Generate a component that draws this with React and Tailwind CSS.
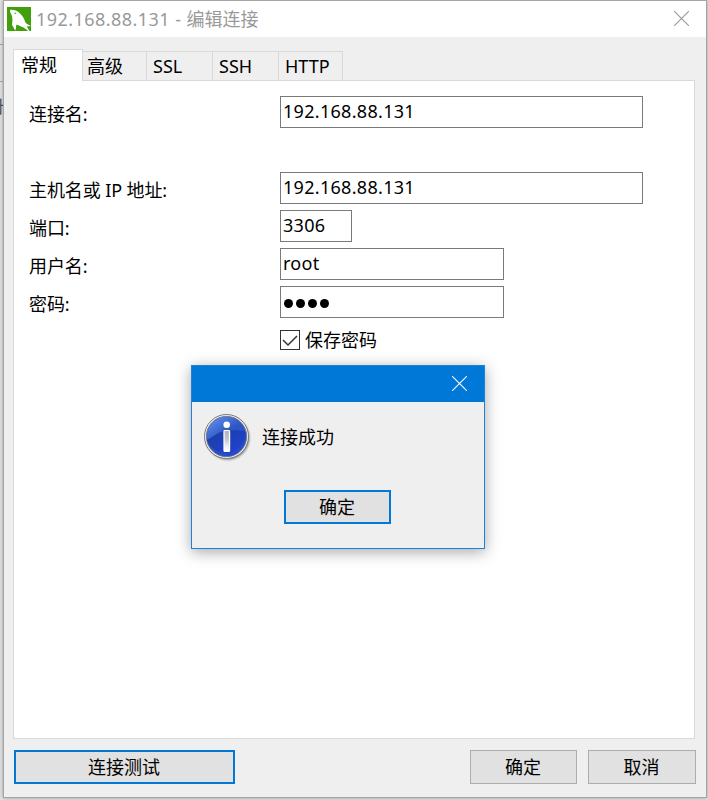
const latin = "font-['Noto_Sans','Noto_Sans_CJK_SC',sans-serif]";

function Cross({ color }) {
  return (
    <svg className="mb-px" width="15" height="15" viewBox="0 0 15 15" fill="none" stroke={color} strokeWidth="1.1">
      <path d="M0 0 15 15M15 0 0 15" />
    </svg>
  );
}

function Logo() {
  return (
    <svg width="24" height="24" viewBox="0 0 24 24">
      <rect width="24" height="24" fill="#409f0a" />
      <path
        d="M3 3C6 2.5 9.5 3.2 12 5.5C14.5 7.8 16.5 10 17.5 13C18 15 19 16.5 21 17.5L24 19L19.8 19.5L22.5 24H21C19 21.8 17 20.5 14 19.4C12 18.8 10.5 17.5 9.3 17.8C9 20 9.2 22 8.2 23.5C7 22 6.8 20 5.3 18.5C4.6 17 5.6 15 5.4 13C5.2 10.5 5.2 9 4.2 7.3C3.4 6 3 5 3 3Z"
        fill="#fff"
      />
      <circle cx="8.2" cy="6.3" r="0.8" fill="#409f0a" />
    </svg>
  );
}

function InfoIcon() {
  return (
    <svg width="50" height="50" viewBox="0 0 50 50">
      <defs>
        <linearGradient id="blue" x1="0" y1="0" x2="0.7" y2="1">
          <stop offset="0" stopColor="#6a98f6" />
          <stop offset="0.5" stopColor="#2f58c2" />
          <stop offset="1" stopColor="#2347d0" />
        </linearGradient>
        <linearGradient id="lower" x1="0" y1="0" x2="1" y2="1">
          <stop offset="0" stopColor="#1c3f9f" />
          <stop offset="1" stopColor="#2141d6" />
        </linearGradient>
        <linearGradient id="stem" x1="0" y1="0" x2="0" y2="1">
          <stop offset="0" stopColor="#b4b4bc" />
          <stop offset="0.4" stopColor="#c4c4cc" />
          <stop offset="0.75" stopColor="#f0f0f4" />
          <stop offset="1" stopColor="#fff" />
        </linearGradient>
        <filter id="soft" x="-20%" y="-20%" width="140%" height="140%">
          <feGaussianBlur stdDeviation="1" />
        </filter>
      </defs>
      <circle cx="23.7" cy="24" r="21.7" fill="#000" opacity="0.45" filter="url(#soft)" />
      <circle cx="22.5" cy="22.5" r="22" fill="#f7f7f7" stroke="#777" strokeWidth="1" />
      <circle cx="22.5" cy="22.5" r="20.2" fill="url(#blue)" stroke="#6a6f80" strokeWidth="0.8" />
      <path d="M2.8 26C11 22 15 16.5 25 16.2C33 16 38 16.5 41.5 17.5A20 20 0 0 1 2.8 26Z" fill="url(#lower)" />
      <circle cx="22.7" cy="10.7" r="3.3" fill="#fff" />
      <rect x="20" y="16.5" width="5.6" height="21" rx="0.8" fill="url(#stem)" stroke="#fff" strokeWidth="1.2" />
    </svg>
  );
}

function Tab({ children, className }) {
  return <div className={`h-[29px] border-t border-r border-[#d9d9d9] leading-[29px] ${className}`}>{children}</div>;
}

function Row({ label, children, className = "" }) {
  return (
    <div className={`flex h-8 ${className}`}>
      <div className="w-[251px] shrink-0 leading-[37px] tracking-[-0.1px]">{label}</div>
      {children}
    </div>
  );
}

function Field({ children, className }) {
  return (
    <div className={`h-8 border border-[#7a7a7a] bg-white pl-0.5 leading-[28px] tracking-[0.3px] ${className}`}>{children}</div>
  );
}

function Dot() {
  return <i className="size-[9px] rounded-full bg-black" />;
}

function Button({ children, className }) {
  return (
    <button className={`flex h-[34px] items-center justify-center bg-[#e1e1e1] pr-px ${className}`}>{children}</button>
  );
}

export default function App() {
  return (
    <div className={`relative h-[800px] w-[708px] overflow-hidden bg-[#e4e4e4] pl-[3px] text-[18px] text-black ${latin}`}>
      <div className="absolute top-[44px] left-0 h-px w-[3px] bg-[#aaa]" />
      <div className="absolute top-[81px] left-0 h-px w-[3px] bg-[#aaa]" />
      <div className="absolute top-[97px] -left-[14px] w-[17px] overflow-hidden leading-[18px] text-[#555]">册</div>
      <div className="relative flex h-[798px] w-[704px] flex-col border border-[#a5a5a5] bg-[#efefef] shadow-[0_0_4px_rgba(0,0,0,0.35)]">
        <header className="flex h-9 shrink-0 items-center bg-white pl-[3px] text-[#999]">
          <Logo />
          <span className="ml-[5px] leading-[34px]">
            <span className="tracking-[0.45px]">192.168.88.131 - </span>编辑连接
          </span>
          <span className="mr-[17px] ml-auto">
            <Cross color="#999" />
          </span>
        </header>
        <nav className="z-10 mt-3 ml-[9px] flex h-8 shrink-0 items-end">
          <div className="h-8 w-[70px] border-x border-t border-[#d9d9d9] bg-white pl-[7px] leading-[31px]">常规</div>
          <Tab className="mb-px w-16 pl-1">高级</Tab>
          <Tab className="mb-px w-[66px] pl-1.5">SSL</Tab>
          <Tab className="mb-px w-[66px] pl-1.5">SSH</Tab>
          <Tab className="mb-px w-16 pl-1.5">HTTP</Tab>
        </nav>
        <main className="-mt-px ml-[9px] h-[659px] w-[682px] shrink-0 border border-[#d9d9d9] bg-white pt-[15px] pl-[15px]">
          <Row label="连接名:">
            <Field className="w-[363px]">192.168.88.131</Field>
          </Row>
          <Row label="主机名或 IP 地址:" className="mt-11">
            <Field className="w-[363px]">192.168.88.131</Field>
          </Row>
          <Row label="端口:" className="mt-1.5">
            <Field className="w-[72px]">3306</Field>
          </Row>
          <Row label="用户名:" className="mt-1.5">
            <Field className="w-[224px]">root</Field>
          </Row>
          <Row label="密码:" className="mt-1.5">
            <Field className="flex w-[224px] items-center gap-[3px] pt-0.5 pl-[3px]">
              <Dot />
              <Dot />
              <Dot />
              <Dot />
            </Field>
          </Row>
          <div className="mt-3 ml-[251px] flex h-5 items-center gap-[5px]">
            <span className="flex size-5 items-center justify-center border border-[#333]">
              <svg width="16" height="14" viewBox="0 0 16 14" fill="none" stroke="#333" strokeWidth="1.5">
                <path d="M1 7 6 12 15 3" />
              </svg>
            </span>
            <span className="leading-5">保存密码</span>
          </div>
        </main>
        <footer className="mt-[11px] ml-2.5 flex">
          <Button className="w-[221px] border-2 border-[#0078d7]">连接测试</Button>
          <Button className="ml-[235px] w-[107px] border border-[#adadad]">确定</Button>
          <Button className="ml-[11px] w-[108px] border border-[#adadad]">取消</Button>
        </footer>
      </div>

      <section className="absolute top-[365px] left-[191px] z-20 h-[184px] w-[294px] border border-[#1a83d8] bg-[#efefef] shadow-[0_3px_14px_rgba(0,0,0,0.35)]">
        <div className="flex h-9 items-center justify-end bg-[#0078d7] pr-[17px]">
          <Cross color="#fff" />
        </div>
        <div className="flex h-[88px] pt-[12px] pl-[12px]">
          <InfoIcon />
          <span className="ml-2 leading-[46px]">连接成功</span>
        </div>
        <Button className="ml-[92px] w-[107px] border-2 border-[#0078d7]">确定</Button>
      </section>
    </div>
  );
}
